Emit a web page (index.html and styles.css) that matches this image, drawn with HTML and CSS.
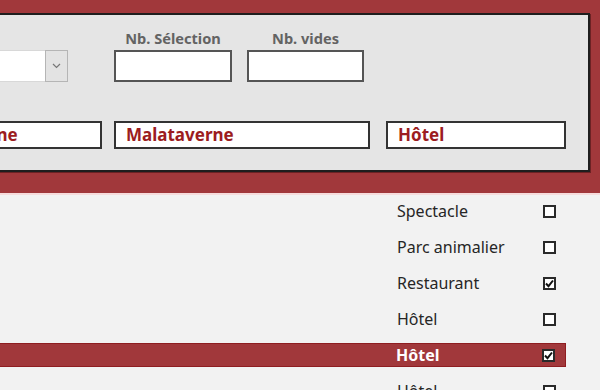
FILE: index.html
```html
<!DOCTYPE html>
<html lang="fr">

<head>
    <meta charset="UTF-8">
    <meta name="viewport" content="width=device-width, initial-scale=1.0">
    <title>Sélection des activités</title>
    <link rel="stylesheet" href="styles.css">
</head>

<body>
    <header class="banner">
        <section class="panel">
            <div class="row-top">
                <div class="field combo-field">
                    <span class="field-label">&nbsp;</span>
                    <div class="combo">
                        <span class="combo-text"></span>
                        <span class="combo-btn">
                            <svg width="9" height="6" viewBox="0 0 9 6">
                                <path d="M1 1 L4.5 4.5 L8 1" fill="none" stroke="#777" stroke-width="1.2" />
                            </svg>
                        </span>
                    </div>
                </div>
                <div class="field sel-field">
                    <label class="field-label" for="nbSel">Nb. Sélection</label>
                    <input type="text" id="nbSel" class="box" />
                </div>
                <div class="field vides-field">
                    <label class="field-label" for="nbVides">Nb. vides</label>
                    <input type="text" id="nbVides" class="box" />
                </div>
            </div>
            <div class="row-bottom">
                <div class="value v-dept">Malataverne</div>
                <div class="value v-ville">Malataverne</div>
                <div class="value v-type">Hôtel</div>
            </div>
        </section>
    </header>

    <main class="list">
        <div class="item">
            <span class="item-name">Spectacle</span>
            <span class="check"></span>
        </div>
        <div class="item">
            <span class="item-name">Parc animalier</span>
            <span class="check"></span>
        </div>
        <div class="item">
            <span class="item-name">Restaurant</span>
            <span class="check checked">
                <svg width="9" height="9" viewBox="0 0 9 9">
                    <path d="M1 4.5 L3.5 7.2 L8 1.5" fill="none" stroke="#111" stroke-width="2" />
                </svg>
            </span>
        </div>
        <div class="item">
            <span class="item-name">Hôtel</span>
            <span class="check"></span>
        </div>
        <div class="item current">
            <span class="item-name">Hôtel</span>
            <span class="check checked">
                <svg width="9" height="9" viewBox="0 0 9 9">
                    <path d="M1 4.5 L3.5 7.2 L8 1.5" fill="none" stroke="#111" stroke-width="2" />
                </svg>
            </span>
        </div>
        <div class="item">
            <span class="item-name">Hôtel</span>
            <span class="check"></span>
        </div>
    </main>
</body>

</html>
```

FILE: styles.css
```css
html {
    font-family: 'Noto Sans', 'Open Sans', sans-serif;
}

body {
    margin: 0;
    background: #f2f2f2;
    height: 390px;
    overflow: hidden;
}

.banner {
    background: #a1383b;
    padding: 13px 10px 21px 0;
    border-bottom: 2px solid #f6dcdc;
    overflow: hidden;
}

.panel {
    margin-left: -120px;
    height: 155px;
    background: #e5e5e5;
    border: 2px solid #1e1e1e;
    border-left: none;
    box-shadow: 1px 1px 0 #6b2224;
    display: flex;
    flex-direction: column;
}

.row-top {
    display: flex;
    padding-top: 14px;
}

.field {
    display: flex;
    flex-direction: column;
}

.field-label {
    height: 21px;
    font-size: 14.6px;
    font-weight: 700;
    color: #636363;
    text-align: center;
    line-height: 19px;
}

.combo-field {
    margin-left: 60px;
    width: 128px;
}

.combo {
    display: flex;
    height: 32px;
    box-sizing: border-box;
}

.combo-text {
    flex: 1;
    background: #fff;
    border-top: 1px solid #d8d8d8;
    border-bottom: 1px solid #d8d8d8;
}

.combo-btn {
    width: 21px;
    background: #e3e3e3;
    border: 1px solid #b5b5b5;
    display: flex;
    align-items: center;
    justify-content: center;
}

.sel-field {
    margin-left: 46px;
    width: 118px;
}

.vides-field {
    margin-left: 15px;
    width: 117px;
}

.box {
    height: 32px;
    box-sizing: border-box;
    border: 2px solid #555;
    background: #fff;
    outline: none;
    padding: 0 4px;
}

.row-bottom {
    display: flex;
    margin-top: 39px;
}

.value {
    height: 28px;
    box-sizing: border-box;
    background: #fff;
    border: 2px solid #333;
    color: #9c1c20;
    font-size: 17px;
    font-weight: 700;
    line-height: 24px;
    padding-left: 10px;
    white-space: nowrap;
    overflow: hidden;
}

.v-dept {
    margin-left: 18px;
    width: 204px;
}

.v-ville {
    margin-left: 12px;
    width: 256px;
}

.v-type {
    margin-left: 16px;
    width: 180px;
}

.list {
    padding-top: 4px;
    display: flex;
    flex-direction: column;
    gap: 12px;
}

.item {
    height: 24px;
    margin-right: 34px;
    padding-right: 10px;
    display: grid;
    grid-template-columns: 1fr 146px 13px;
    align-items: center;
    box-sizing: border-box;
    font-size: 16px;
    color: #262626;
}

.item::before {
    content: '';
}

.item.current {
    background: #a1383b;
    border: 1px solid #8f1d21;
    border-left: none;
    color: #fff;
    font-weight: 700;
}

.check {
    width: 13px;
    height: 13px;
    box-sizing: border-box;
    border: 2px solid #2a2a2a;
    background: #fff;
    display: flex;
    align-items: center;
    justify-content: center;
}
```
